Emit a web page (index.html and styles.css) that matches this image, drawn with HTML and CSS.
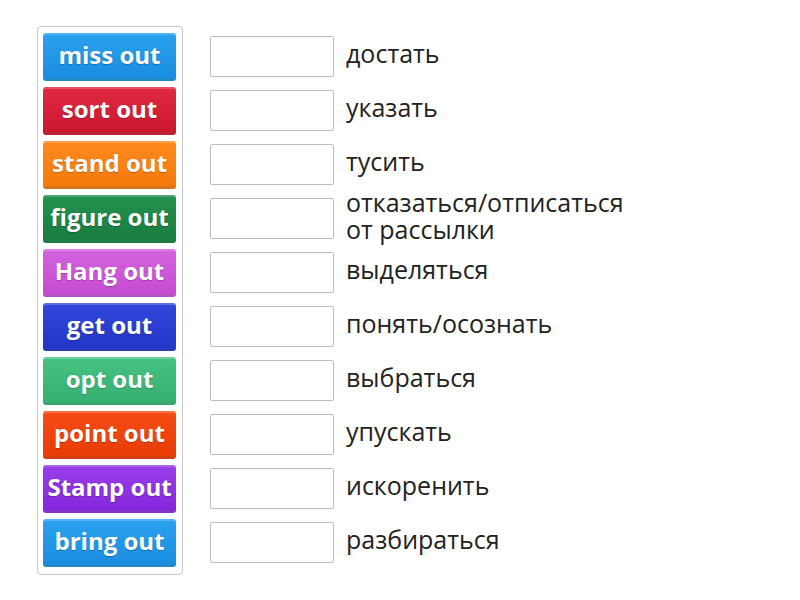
FILE: index.html
```html
<!DOCTYPE html>
<html lang="ru">
<head>
  <meta charset="UTF-8" />
  <meta name="viewport" content="width=device-width, initial-scale=1" />
  <title>Match up</title>
  <link rel="stylesheet" href="styles.css">
</head>
<body>
  <div class="game">
    <div class="tiles">
      <div class="tile blue">miss out</div>
      <div class="tile red">sort out</div>
      <div class="tile orange">stand out</div>
      <div class="tile green">figure out</div>
      <div class="tile pink">Hang out</div>
      <div class="tile navy">get out</div>
      <div class="tile mint">opt out</div>
      <div class="tile flame">point out</div>
      <div class="tile purple">Stamp out</div>
      <div class="tile blue">bring out</div>
    </div>

    <div class="rows">
      <div class="row"><div class="slot"></div><p class="def">достать</p></div>
      <div class="row"><div class="slot"></div><p class="def">указать</p></div>
      <div class="row"><div class="slot"></div><p class="def">тусить</p></div>
      <div class="row"><div class="slot"></div><p class="def">отказаться/отписаться<br>от рассылки</p></div>
      <div class="row"><div class="slot"></div><p class="def">выделяться</p></div>
      <div class="row"><div class="slot"></div><p class="def">понять/осознать</p></div>
      <div class="row"><div class="slot"></div><p class="def">выбраться</p></div>
      <div class="row"><div class="slot"></div><p class="def">упускать</p></div>
      <div class="row"><div class="slot"></div><p class="def">искоренить</p></div>
      <div class="row"><div class="slot"></div><p class="def">разбираться</p></div>
    </div>
  </div>
</body>
</html>
```

FILE: styles.css
```css
body {
  margin: 0;
  background: #fff;
  font-family: "Open Sans", "Noto Sans", sans-serif;
}

.game {
  display: flex;
  align-items: flex-start;
  padding: 26px 0 0 37px;
}

.tiles {
  display: flex;
  flex-direction: column;
  gap: 6px;
  padding: 6px 6px 7px 5px;
  border: 1px solid #c8c8c8;
  border-radius: 4px;
}

.tile {
  width: 133px;
  height: 48px;
  box-sizing: border-box;
  border-radius: 3px;
  color: #fff;
  font-size: 24px;
  font-weight: bold;
  line-height: 43px;
  text-align: center;
  white-space: nowrap;
  text-shadow: 0 1px 1px rgba(0,0,0,0.25);
  border-bottom: 3px solid rgba(0,0,0,0.15);
  box-shadow: inset 0 2px 0 rgba(255,255,255,0.2);
}

.blue   { background: linear-gradient(#2aa2ee, #1a8de0); }
.red    { background: linear-gradient(#df2a40, #cc1830); }
.orange { background: linear-gradient(#ff8a1f, #f57a0c); }
.green  { background: linear-gradient(#23924f, #1a7d40); }
.pink   { background: linear-gradient(#d464de, #c64bd2); }
.navy   { background: linear-gradient(#3148dc, #2236c8); }
.mint   { background: linear-gradient(#47c282, #35b070); }
.flame  { background: linear-gradient(#f74d16, #e83c06); }
.purple { background: linear-gradient(#9a3fea, #8427dc); }

.rows {
  display: flex;
  flex-direction: column;
  gap: 13px;
  margin: 10px 0 0 27px;
}

.row {
  display: flex;
  align-items: center;
  height: 41px;
}

.slot {
  width: 124px;
  height: 41px;
  box-sizing: border-box;
  border: 1px solid #bdbdbd;
  border-radius: 2px;
  background: #fff;
  flex-shrink: 0;
}

.def {
  margin: -6px 0 0 12px;
  font-size: 25px;
  line-height: 27px;
  color: #222;
}
```
